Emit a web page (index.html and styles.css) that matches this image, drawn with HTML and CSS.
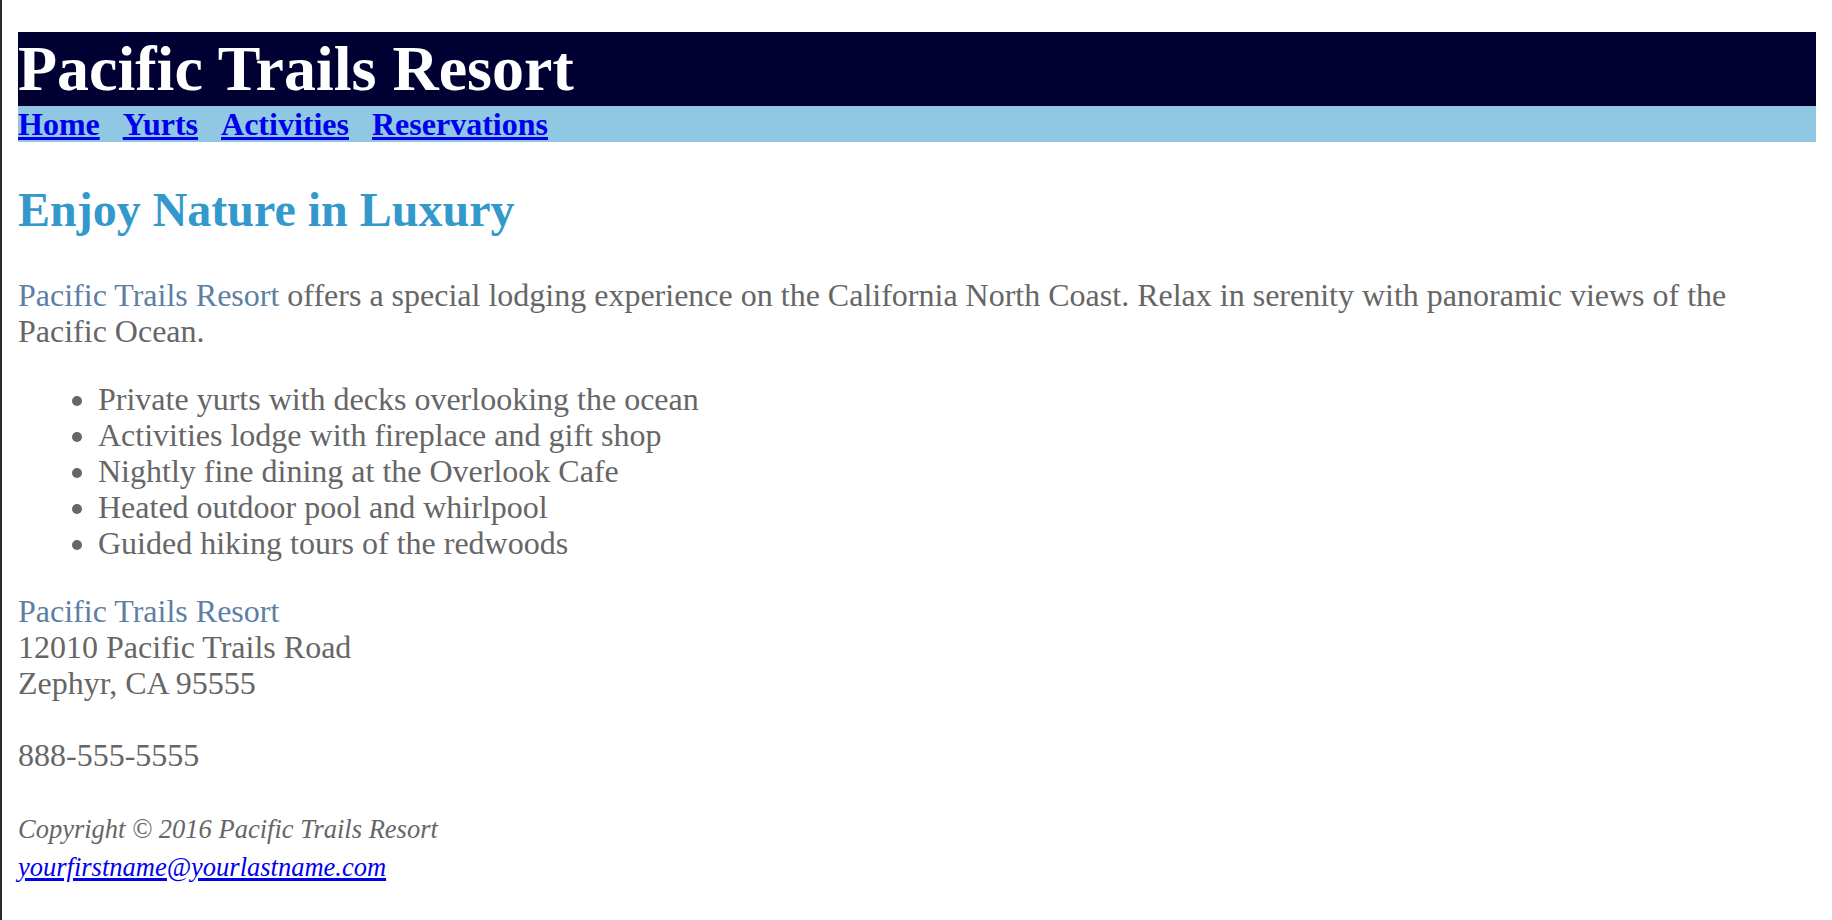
FILE: index.html
```html
<!DOCTYPE html>
<html lang="en">
<head>
<meta charset="utf-8">
<title>Pacific Trails Resort</title>
<link rel="stylesheet" href="styles.css">
</head>
<body>
<div class="wrapper">
  <header class="site-header">
    <h1 class="site-title">Pacific Trails Resort</h1>
  </header>
  <nav class="site-nav">
    <a class="nav-link" href="#">Home</a>
    <a class="nav-link" href="#">Yurts</a>
    <a class="nav-link" href="#">Activities</a>
    <a class="nav-link" href="#">Reservations</a>
  </nav>
  <main class="content">
    <h2 class="tagline">Enjoy Nature in Luxury</h2>
    <p class="intro"><span class="resort">Pacific Trails Resort</span> offers a special lodging experience on the California North Coast. Relax in serenity with panoramic views of the Pacific Ocean.</p>
    <ul class="features">
      <li>Private yurts with decks overlooking the ocean</li>
      <li>Activities lodge with fireplace and gift shop</li>
      <li>Nightly fine dining at the Overlook Cafe</li>
      <li>Heated outdoor pool and whirlpool</li>
      <li>Guided hiking tours of the redwoods</li>
    </ul>
    <div class="contact">
      <span class="resort">Pacific Trails Resort</span><br>
      12010 Pacific Trails Road<br>
      Zephyr, CA 95555<br>
      <br>
      888-555-5555
    </div>
  </main>
  <footer class="site-footer">
    <small class="fine">Copyright &copy; 2016 Pacific Trails Resort</small><br>
    <a class="email" href="#"><small class="fine">yourfirstname@yourlastname.com</small></a>
  </footer>
</div>
</body>
</html>
```
FILE: styles.css
```css
html {
  background: linear-gradient(to right, #2b2b2b 0, #2b2b2b 2px, #ffffff 2px);
}

body {
  margin: 0;
  font-family: "Liberation Serif", "Times New Roman", serif;
  font-size: 32px;
  line-height: 36px;
  color: #666666;
}

.wrapper {
  padding: 32px 16px 0 18px;
}

.site-header {
  background-color: #000033;
}

.site-title {
  margin: 0;
  font-size: 64px;
  font-weight: bold;
  line-height: 74px;
  color: #ffffff;
}

.site-nav {
  display: flex;
  gap: 23px;
  background-color: #90c7e3;
  font-weight: bold;
  height: 36px;
  line-height: 36px;
}

.nav-link {
  color: #0000ee;
  text-decoration: underline;
}

.tagline {
  margin: 40px 0;
  font-size: 48px;
  font-weight: bold;
  line-height: 55px;
  color: #3399cc;
}

.intro {
  margin: 40px 0 32px;
}

.resort {
  color: #5c7fa3;
}

.features {
  margin: 32px 0;
  padding-left: 80px;
}

.contact {
  margin: 0;
}

.site-footer {
  margin-top: 36px;
  padding-bottom: 40px;
}

.fine {
  font-size: 26.5px;
  font-style: italic;
}

.email {
  color: #0000ee;
  text-decoration: underline;
}
```
